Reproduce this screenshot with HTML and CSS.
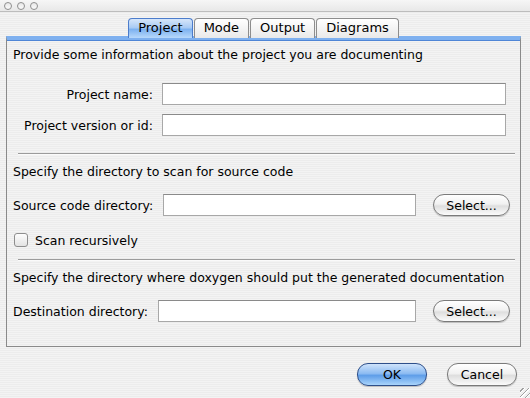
FILE: index.html
```html
<!DOCTYPE html>
<html lang="en">
<head>
  <meta charset="UTF-8" />
  <title>Doxygen Wizard</title>
  <link rel="stylesheet" href="styles.css">
</head>
<body>
  <div class="window">
    <div class="titlebar">
      <span class="light"></span>
      <span class="light"></span>
      <span class="light"></span>
    </div>

    <div class="tabs">
      <span class="tab active">Project</span>
      <span class="tab">Mode</span>
      <span class="tab">Output</span>
      <span class="tab">Diagrams</span>
    </div>

    <div class="pane">
      <p class="intro">Provide some information about the project you are documenting</p>
      <div class="project-grid">
        <label>Project name:</label>
        <input type="text" />
        <label>Project version or id:</label>
        <input type="text" />
      </div>

      <hr />

      <p class="intro">Specify the directory to scan for source code</p>
      <div class="dir-row">
        <label>Source code directory:</label>
        <input type="text" />
        <button class="aqua">Select...</button>
      </div>
      <label class="check"><span class="box"></span>Scan recursively</label>

      <hr />

      <p class="intro">Specify the directory where doxygen should put the generated documentation</p>
      <div class="dir-row">
        <label>Destination directory:</label>
        <input type="text" />
        <button class="aqua">Select...</button>
      </div>
    </div>

    <div class="actions">
      <button class="aqua default">OK</button>
      <button class="aqua">Cancel</button>
    </div>
    <div class="grip"></div>
  </div>
</body>
</html>
```

FILE: styles.css
```css
* { box-sizing: border-box; }
body {
  margin: 0;
  font-family: "DejaVu Sans", sans-serif;
  font-size: 12.5px;
  color: #000;
}
.window {
  position: relative;
  width: 530px;
  height: 398px;
  background: repeating-linear-gradient(to bottom, #ececec 0 1px, #f3f3f3 1px 2px);
  overflow: hidden;
}
.titlebar {
  height: 12px;
  display: flex;
  align-items: center;
  gap: 5px;
  padding-left: 4px;
  background: linear-gradient(#f6f6f6, #e8e8e8);
  border-bottom: 1px solid #bdbdbd;
}
.light {
  width: 8px;
  height: 8px;
  border-radius: 50%;
  border: 1px solid #8f8f8f;
  background: linear-gradient(#e8e8e8, #fafafa);
}
.tabs {
  display: flex;
  justify-content: center;
  gap: 1px;
  margin-top: 6px;
  height: 18px;
  position: relative;
  z-index: 1;
  padding-right: 3px;
}
.tab {
  padding: 0 9px;
  height: 20px;
  line-height: 18px;
  font-size: 13px;
  border: 1px solid #8d8d8d;
  border-bottom: none;
  border-radius: 4px 4px 0 0;
  background: linear-gradient(#ffffff, #e9e9e9);
}
.tab.active {
  border-color: #4c7ccb;
  background: linear-gradient(#d6e6fa 0, #a9cbf4 45%, #7db2f0 55%, #b7d8fb 100%);
}
.pane {
  margin: 0 9px 0 6px;
  height: 311px;
  border: 1px solid #8a8a8a;
  border-top: 4px solid #7eb0ef;
  box-shadow: inset 0 1px 0 #4f86d6;
  padding: 5px 10px 0 6px;
}
.intro {
  margin: 0;
  height: 20px;
  line-height: 20px;
}
.project-grid {
  display: grid;
  grid-template-columns: 140px 1fr;
  column-gap: 9px;
  row-gap: 9px;
  align-items: center;
  margin: 18px 4px 0 0;
}
.project-grid label { text-align: right; }
input {
  height: 22px;
  border: 1px solid #a8a8a8;
  border-top-color: #8a8a8a;
  background: #fff;
  margin: 0;
}
hr {
  border: none;
  border-top: 1px solid #9b9b9b;
  border-bottom: 1px solid #fafafa;
  margin: 17px -5px 7px 5px;
}
.check + hr { margin-top: 11px; }
.dir-row {
  display: flex;
  align-items: center;
  gap: 10px;
  margin-top: 12px;
}
.dir-row input { flex: 1; margin-right: 7px; }
.aqua {
  font-family: inherit;
  font-size: 12.5px;
  height: 22px;
  width: 77px;
  border-radius: 11px;
  border: 1px solid #7a7a7a;
  background: linear-gradient(#ffffff 0, #f1f1f1 45%, #dedede 55%, #fbfbfb 100%);
  box-shadow: 0 1px 1px rgba(0,0,0,0.2);
  padding: 0;
  color: #000;
}
.aqua.default {
  border-color: #2e4f8a;
  background: linear-gradient(#cfe3fb 0, #8dbcf2 45%, #5f9ee9 55%, #a9d4fb 100%);
}
.check {
  display: flex;
  align-items: center;
  gap: 7px;
  margin: 16px 0 0 1px;
  height: 16px;
}
.box {
  width: 14px;
  height: 14px;
  border: 1px solid #8e8e8e;
  border-radius: 3px;
  background: linear-gradient(#fdfdfd, #e3e3e3);
}
.actions {
  display: flex;
  justify-content: flex-end;
  gap: 20px;
  padding: 16px 13px 0 0;
}
.actions .aqua { width: 70px; height: 23px; }
.grip {
  position: absolute;
  right: 0;
  bottom: 0;
  width: 10px;
  height: 10px;
  background: repeating-linear-gradient(135deg, transparent 0 2px, #a0a0a0 2px 3px, #fff 3px 4px);
}
```
